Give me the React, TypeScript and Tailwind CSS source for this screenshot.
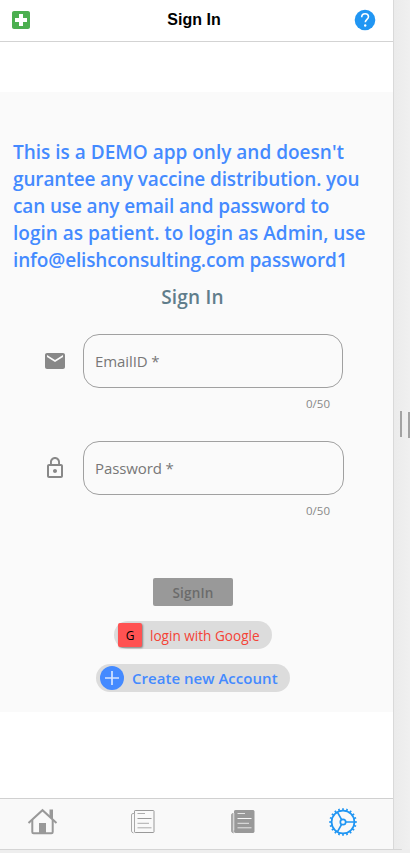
import type { ReactNode } from "react";
import { MdEmail, MdLocalHospital, MdLockOutline } from "react-icons/md";

const introLines = [
  { text: "This is a DEMO app only and doesn't", tracking: "tracking-normal" },
  { text: "gurantee any vaccine distribution. you", tracking: "tracking-[-0.13px]" },
  { text: "can use any email and password to", tracking: "tracking-[-0.14px]" },
  { text: "login as patient. to login as Admin, use", tracking: "tracking-normal" },
  { text: "info@elishconsulting.com password1", tracking: "tracking-[-0.15px]" },
];

function HelpIcon() {
  return (
    <svg className="size-6" viewBox="0 0 24 24" fill="none">
      <circle cx="12" cy="12" r="10.3" fill="#2196f3" />
      <path d="M8.7 9.2c0-2.1 1.4-3.5 3.4-3.5s3.4 1.3 3.4 3.1c0 2.5-3.2 2.7-3.2 5.4" stroke="#fff" strokeWidth="1.6" />
      <circle cx="12.2" cy="17.5" r="1.2" fill="#fff" />
    </svg>
  );
}

function Header() {
  return (
    <header className="flex h-[42px] shrink-0 items-center justify-between border-b border-[#d3d3d3] bg-white pb-px pl-[9px] pr-4">
      <MdLocalHospital className="size-6 text-[#4caf50]" />
      <h1 className="pl-0.5 font-['Liberation_Sans',sans-serif] text-base font-semibold leading-6 text-black">Sign In</h1>
      <HelpIcon />
    </header>
  );
}

function Field({ icon, label, wide }: { icon: ReactNode; label: string; wide?: boolean }) {
  return (
    <div className="flex h-[107px] items-start">
      <div className="flex h-[54px] w-6 items-center justify-center text-[#888]">{icon}</div>
      <div className={wide ? "ml-4 w-[261px]" : "ml-4 w-[260px]"}>
        <div className="flex h-[54px] items-center rounded-[16px] border border-[#a0a0a0] px-[11px] text-[15px] tracking-[-0.1px] text-[#777]">
          {label}
        </div>
        <div className="w-[247px] pt-[7px] text-right text-[11.5px] leading-[17px] text-[#888]">0/50</div>
      </div>
    </div>
  );
}

function HomeIcon() {
  return (
    <svg className="h-8 w-8" viewBox="0 0 32 32" fill="none" stroke="#999" strokeWidth="2">
      <path d="M1.5 17 15.5 4.2 29.5 17" />
      <path d="M5.3 14v12q0 1.2 1.2 1.2h18q1.2 0 1.2-1.2V14" />
      <path d="M22.5 3.5h3.5v10l-3.5-2.7Z" fill="#999" stroke="none" />
      <path d="M12 17h7v10.5h-7Z" fill="#999" stroke="none" />
    </svg>
  );
}

function PaperIcon({ filled }: { filled?: boolean }) {
  const line = filled ? "#f9f9f9" : "#999";
  return (
    <svg className="h-6 w-6" viewBox="0 0 24 24" fill="none" stroke="#999">
      <path d="M3.5 3.5H2q-1.5 0-1.5 1.5v16q0 1.5 2 2" stroke="#aaa" fill={filled ? "#aaa" : "none"} />
      <rect x="3.5" y=".5" width="19.5" height="22" rx=".7" fill={filled ? "#999" : "none"} />
      <path d={filled ? "M2.8 3v17.5" : "M3.5 3v17.5"} stroke={filled ? "#e5e5e5" : "#aaa"} />
      <g stroke={line}>
        <path d="M6.5 3.5h7.5M6.5 13.3h11.5M6.5 17.8h14" strokeOpacity=".8" />
        <path d="M6.5 8.5h14" />
      </g>
    </svg>
  );
}

function GearIcon() {
  const teeth = Array.from({ length: 20 }, (_, i) => i * 18);
  return (
    <svg className="h-7 w-7" viewBox="0 0 28 28" fill="none" stroke="#2196f3" strokeWidth="1.7">
      <circle cx="14" cy="14" r="11.4" />
      <circle cx="14" cy="14" r="2.7" />
      <path d="M16.7 14H25M12.6 11.7 8.4 4.2M12.6 16.3l-4.2 7.5" />
      {teeth.map((angle) => (
        <path key={angle} d="M14 2.6V.2" transform={`rotate(${angle} 14 14)`} />
      ))}
    </svg>
  );
}

export default function App() {
  return (
    <div className="flex h-[853px] w-[410px] flex-col overflow-hidden bg-[#eee] font-['Open_Sans','Noto_Sans',sans-serif]">
      <div className="flex h-[849px]">
        <div className="flex w-[394px] shrink-0 flex-col border-r border-[#d9d9d9] bg-white">
          <Header />
          <main className="mt-[50px] flex h-[620px] flex-col bg-[#fafafa] pt-[47px]">
            <div className="pl-[13px] text-[19px] font-semibold leading-[27px] text-[#448aff]">
              {introLines.map((line) => (
                <p key={line.text} className="whitespace-nowrap"><span className={line.tracking}>{line.text}</span></p>
              ))}
            </div>
            <h2 className="mt-[10px] pr-2 text-center text-[19px] font-semibold leading-[27px] tracking-[0.2px] text-[#607d8b]">Sign In</h2>
            <form className="mt-[23px] pl-[43px]">
              <Field label="EmailID *" icon={<MdEmail className="size-6" />} />
              <Field label="Password *" wide icon={<MdLockOutline className="size-6" />} />
            </form>
            <div className="mt-[30px] flex flex-col items-center pr-[7px]">
              <button className="h-7 w-20 rounded-xs bg-[#999] pt-0.5 text-[13.5px] font-semibold leading-[26px] tracking-[0.2px] text-[#6b6b6b]">SignIn</button>
              <button className="mt-[15px] flex h-7 w-[158px] items-center whitespace-nowrap rounded-full bg-[#dcdcdc] pl-1 text-[13.6px] text-[#f44336]">
                <span className="mr-2 flex size-6 items-center justify-center rounded-xs bg-[#ff5252] pt-0.5 text-[12px] font-medium text-black shadow-[1px_1px_2px_rgba(0,0,0,0.4)]">G</span>
                <span className="pt-0.5">login with Google</span>
              </button>
              <button className="mt-[15px] flex h-7 w-[194px] items-center whitespace-nowrap rounded-full bg-[#dcdcdc] pl-1 text-[15px] font-semibold text-[#448aff]">
                <span className="mr-2 flex size-6 items-center justify-center rounded-full bg-[#448aff]">
                  <svg className="size-6" viewBox="0 0 24 24" stroke="#d5e4ff" strokeWidth="1.7"><path d="M12 5v14M5 12h14" /></svg>
                </span>
                <span className="tracking-[0.03px]">Create new Account</span>
              </button>
            </div>
          </main>
          <nav className="mt-auto flex h-[51px] items-start border-t border-[#d0d0d0] bg-[#f9f9f9]">
            <div className="flex h-[46px] w-[86px] items-center justify-center"><HomeIcon /></div>
            <div className="flex h-[46px] w-[114px] items-center justify-center"><PaperIcon /></div>
            <div className="flex h-[46px] w-[86px] items-center justify-center"><PaperIcon filled /></div>
            <div className="flex h-[46px] w-[107px] items-center justify-center pl-[6px]"><GearIcon /></div>
          </nav>
        </div>
        <div className="flex w-4 items-start bg-gradient-to-r from-[#ebebeb] to-[#f0f0f0] pl-1.5 pt-[411px]">
          <div className="h-[26px] w-0.5 shrink-0 bg-[#a3a3a3]" />
          <div className="ml-1.5 mt-px h-[26px] w-0.5 shrink-0 bg-[#a3a3a3]" />
        </div>
      </div>
      <div className="h-px w-[402px] rounded-r bg-[#d5d5d5]" />
      <div className="flex-1 bg-[#eee]" />
    </div>
  );
}
